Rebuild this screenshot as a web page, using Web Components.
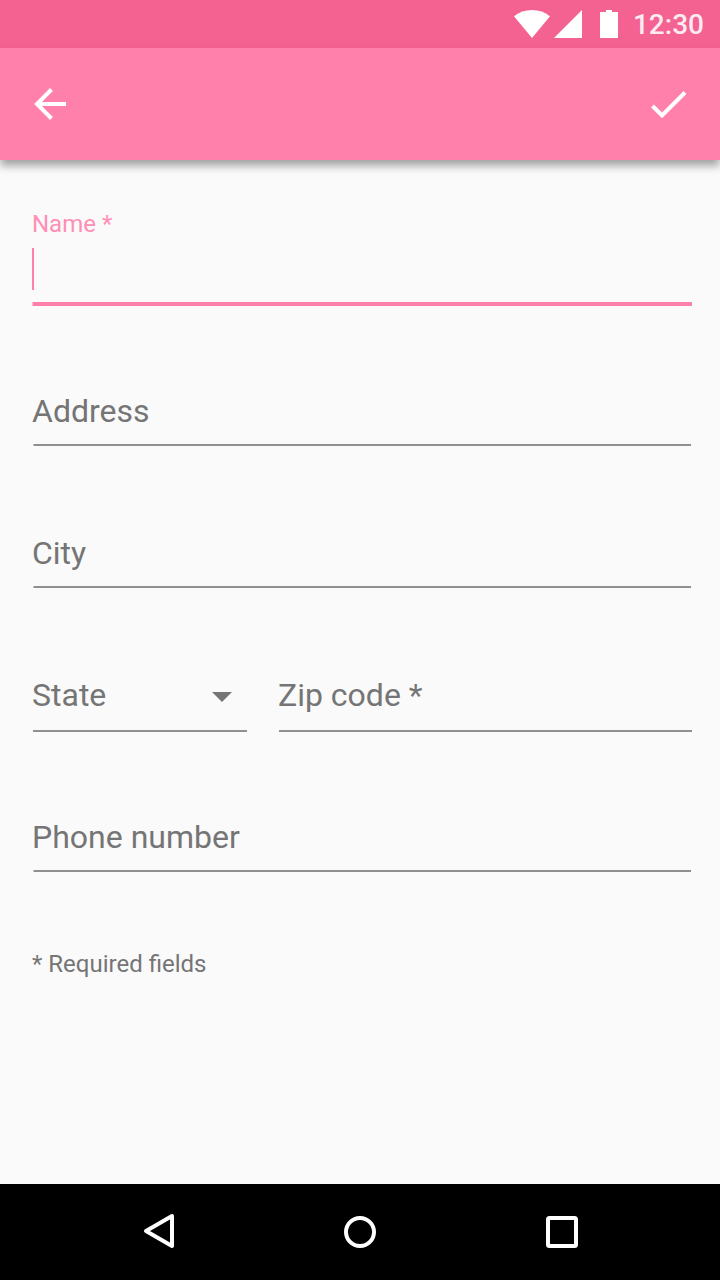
<!DOCTYPE html>
<html lang="en">
<head>
<meta charset="utf-8">
<title>Contact form</title>
<style>
html, body { margin: 0; height: 100%; }
body { font-family: Roboto, "Noto Sans", sans-serif; background: #fafafa; overflow: hidden; }
</style>
</head>
<body>
<contact-screen></contact-screen>
<script>
const define = (name, html) => customElements.define(name, class extends HTMLElement {
  constructor() {
    super();
    const t = document.createElement('template');
    t.innerHTML = html;
    this.attachShadow({ mode: 'open' }).append(t.content.cloneNode(true));
  }
});

define('status-bar', `
<style>
:host { display: flex; height: 48px; background: #f46292; color: rgba(255,255,255,.88); box-sizing: border-box; padding-right: 16px; justify-content: flex-end; }
svg { display: block; fill: #fff; flex: none; }
span { font-size: 28px; font-weight: 500; line-height: 50px; width: 86px; text-align: right; white-space: nowrap; }
</style>
<svg width="104" height="48" viewBox="514 0 104 48">
  <path d="M514 16.2Q522 10 532 10T550 16.2L532 38Z"/>
  <path d="M554 38L582 10V38Z"/>
  <path d="M600 12H606V10H612V12H618V38H600Z"/>
</svg>
<span><slot></slot></span>`);

define('app-bar', `
<style>
:host { display: flex; height: 112px; background: #ff80ab; justify-content: space-between; align-items: center; padding: 0 26px; box-sizing: border-box; box-shadow: 0 6px 8px rgba(0,0,0,.34); position: relative; }
svg { display: block; fill: none; stroke: #fff; stroke-width: 4; }
</style>
<svg width="48" height="48" viewBox="26 80 48 48"><path d="M66 104H37M51.5 89.5L37 104L51.5 118.5"/></svg>
<svg width="48" height="48" viewBox="646 80 48 48"><path d="M652.5 106L662 115.5L685 92.5"/></svg>`);

define('text-field', `
<style>
:host { display: block; color: #757575; }
.label { font-size: 32px; line-height: 40px; display: flex; justify-content: space-between; white-space: nowrap; }
.line { height: 2px; margin: var(--gap, 13px) 1px 0; background: linear-gradient(90deg, var(--edge, #c4c4c4) 1px, #8f8f8f 1px); }
.caret { display: none; width: 2px; height: 42px; margin-top: 10px; background: #ff80ab; }
:host([active]) { color: #ff8fb5; }
:host([active]) .label { font-size: 24px; line-height: 28px; }
:host([active]) .caret { display: block; }
:host([active]) .line { height: 4px; margin: 12px 0 0; background: linear-gradient(90deg, #fdbdd2 1px, #ff80ab 1px); }
</style>
<div class="label"><span><slot></slot></span><slot name="end"></slot></div>
<div class="caret"></div>
<div class="line"></div>`);

define('drop-arrow', `
<style>:host { display: block; } svg { display: block; fill: #757575; }</style>
<svg width="36" height="40" viewBox="212 675 36 40"><path d="M212 692H232L222 702Z"/></svg>`);

define('nav-bar', `
<style>
:host { display: flex; height: 96px; background: #000; justify-content: center; align-items: center; gap: 154px; }
svg { display: block; fill: none; stroke: #fff; stroke-width: 4; stroke-linejoin: round; }
</style>
<svg width="48" height="48" viewBox="134 1208 48 48"><path d="M146 1231L172 1216V1246Z"/></svg>
<svg width="48" height="48" viewBox="336 1208 48 48"><circle cx="360" cy="1232" r="14"/></svg>
<svg width="48" height="48" viewBox="538 1208 48 48"><rect x="548" y="1218" width="28" height="28" rx="1.5"/></svg>`);

define('contact-screen', `
<style>
:host { display: flex; flex-direction: column; width: 720px; height: 1280px; background: #fafafa; }
main { flex: 1; padding: 50px 28px 0 32px; }
.address { margin-top: 85px; }
.city { margin-top: 87px; }
.row { display: grid; grid-template-columns: 216px 415px; gap: 30px; margin-top: 87px; --gap: 15px; --edge: #8f8f8f; }
.phone { margin-top: 85px; }
p { margin: 78px 0 0; font-size: 24px; line-height: 28px; color: #757575; }
</style>
<status-bar>12:30</status-bar>
<app-bar></app-bar>
<main>
  <text-field active>Name *</text-field>
  <text-field class="address">Address</text-field>
  <text-field class="city">City</text-field>
  <div class="row">
    <text-field>State<drop-arrow slot="end"></drop-arrow></text-field>
    <text-field>Zip code *</text-field>
  </div>
  <text-field class="phone">Phone number</text-field>
  <p>* Required fields</p>
</main>
<nav-bar></nav-bar>`);
</script>
</body>
</html>
